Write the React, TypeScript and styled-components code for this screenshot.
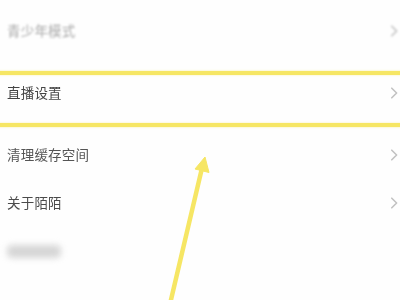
import React from "react";
import styled, { createGlobalStyle } from "styled-components";

const Global = createGlobalStyle`
  html, body { margin: 0; padding: 0; background: #ffffff; }
  body { font-family: "Noto Sans CJK SC", "Noto Sans", sans-serif; }
  #root { width: 400px; height: 300px; overflow: hidden; }
`;

const Screen = styled.div`
  position: relative;
  width: 400px;
  height: 300px;
  overflow: hidden;
  background: #fefefe;
`;

const Section = styled.div<{ $gap?: number }>`
  display: flex;
  flex-direction: column;
  margin-top: ${(p) => p.$gap ?? 0}px;
`;

const Row = styled.div<{ $h: number }>`
  height: ${(p) => p.$h}px;
  display: flex;
  align-items: center;
  justify-content: space-between;
  padding: 0 2px 0 7px;
  box-sizing: border-box;
`;

const Label = styled.span<{ $blur?: boolean; $color?: string }>`
  font-size: 13.5px;
  line-height: 1;
  color: ${(p) => p.$color ?? "#555"};
  filter: ${(p) => (p.$blur ? "blur(0.9px)" : "blur(0.2px)")};
  letter-spacing: 0.2px;
`;

const Redacted = styled.span`
  display: block;
  width: 54px;
  height: 13px;
  margin-left: 0;
  border-radius: 5px;
  background: #d6d6d6;
  filter: blur(3px);
`;

const ChevronWrap = styled.span<{ $blur?: boolean }>`
  display: flex;
  width: 8px;
  height: 12px;
  filter: ${(p) => (p.$blur ? "blur(0.8px)" : "none")};
`;

const Highlight = styled.div`
  position: absolute;
  left: -10px;
  right: -10px;
  top: 71px;
  height: 56px;
  box-sizing: border-box;
  border: 4px solid #f6e664;
  box-shadow: 0 0 2px rgba(246, 230, 100, 0.6), inset 0 0 2px rgba(246, 230, 100, 0.6);
  pointer-events: none;
`;

const ArrowLayer = styled.svg`
  position: absolute;
  left: 0;
  top: 0;
  width: 400px;
  height: 300px;
  pointer-events: none;
`;

const Chevron: React.FC<{ blur?: boolean }> = ({ blur }) => (
  <ChevronWrap $blur={blur}>
    <svg width="8" height="12" viewBox="0 0 8 12">
      <path d="M1.8 1.2 L6.6 6 L1.8 10.8" fill="none" stroke="#c2c2c2" strokeWidth="1.6" strokeLinecap="round" strokeLinejoin="round" />
    </svg>
  </ChevronWrap>
);

export default function App() {
  return (
    <>
      <Global />
      <Screen>
        <Section>
          <Row $h={62}>
            <Label $blur $color="#a9a9a9">青少年模式</Label>
            <Chevron blur />
          </Row>
          <Row $h={62}>
            <Label $color="#444">直播设置</Label>
            <Chevron />
          </Row>
        </Section>
        <Section $gap={7}>
          <Row $h={48}>
            <Label $color="#555">清理缓存空间</Label>
            <Chevron />
          </Row>
          <Row $h={48}>
            <Label $color="#4a4a4a">关于陌陌</Label>
            <Chevron />
          </Row>
          <Row $h={48}>
            <Redacted />
          </Row>
        </Section>
        <Highlight />
        <ArrowLayer viewBox="0 0 400 300">
          <line x1="170" y1="304" x2="202" y2="168" stroke="#f6e664" strokeWidth="4.5" strokeLinecap="round" />
          <polygon points="205,157 209,172.5 195,169" fill="#f6e664" stroke="#f6e664" strokeWidth="1" strokeLinejoin="round" />
        </ArrowLayer>
      </Screen>
    </>
  );
}
